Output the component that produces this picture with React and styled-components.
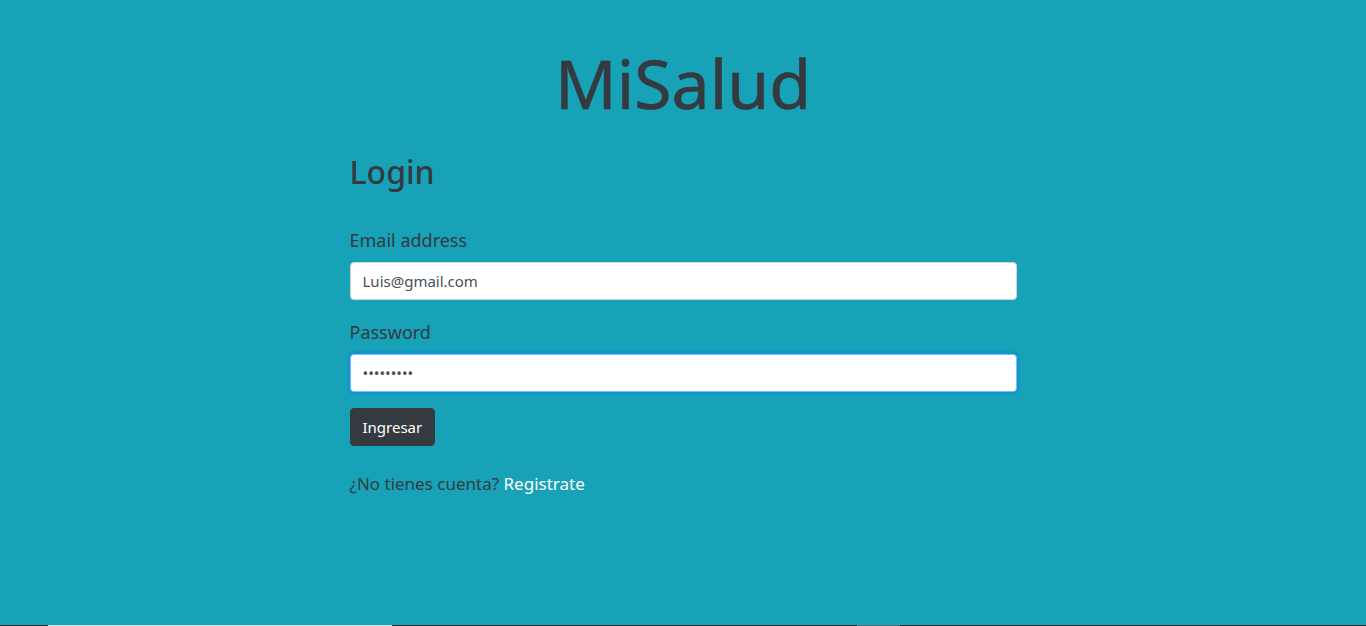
import React from 'react';
import styled, { createGlobalStyle } from 'styled-components';

const GlobalStyle = createGlobalStyle`
  * { box-sizing: border-box; }
  html, body { margin: 0; padding: 0; }
  body {
    font-family: "Noto Sans", "Open Sans", "Liberation Sans", sans-serif;
    color: #343a40;
    background: #17a2b8;
  }
`;

const Page = styled.div`
  min-height: 100vh;
  display: flex;
  flex-direction: column;
  background: #17a2b8;
`;

const Main = styled.main`
  flex: 1;
  padding-top: 42px;
`;

const Title = styled.h1`
  margin: 0;
  text-align: center;
  font-size: 68px;
  font-weight: 400;
  line-height: 1.2;
  color: #343a40;
  -webkit-text-stroke: 0.6px #343a40;
`;

const FormBox = styled.div`
  width: 667px;
  margin: 29px auto 0;
`;

const Heading = styled.h2`
  margin: 0 0 36px;
  font-size: 32px;
  font-weight: 500;
  line-height: 1.2;
`;

const Group = styled.div`
  margin-bottom: 16px;
  & + & {
    margin-top: 19px;
  }
`;

const Label = styled.label`
  display: block;
  margin-bottom: 8px;
  font-size: 18px;
  line-height: 1.5;
  color: #343a40;
`;

const Input = styled.input`
  display: block;
  width: 100%;
  height: 38px;
  padding: 6px 12px;
  font-family: inherit;
  font-size: 15px;
  color: #495057;
  background: #fff;
  border: 1px solid #ced4da;
  border-radius: 4px;
  outline: none;
  ${p => p.$focused && `
    border-color: #80bdff;
    box-shadow: 0 0 0 3px rgba(0, 123, 255, 0.25);
  `}
`;

const Button = styled.button`
  display: inline-block;
  height: 38px;
  padding: 0 12px;
  font-family: inherit;
  font-size: 15px;
  color: #fff;
  background: #343a40;
  border: 1px solid #343a40;
  border-radius: 4px;
  cursor: pointer;
`;

const Footer = styled.p`
  margin: 25px 0 0;
  font-size: 17px;
  line-height: 1.5;
`;

const Link = styled.a`
  color: #fff;
  text-decoration: none;
`;

const Strip = styled.div`
  display: flex;
  height: 1px;
`;

const Seg = styled.div`
  width: ${p => p.$w}px;
  flex: ${p => (p.$grow ? 1 : 'none')};
  background: ${p => p.$c};
`;

export default function App() {
  return (
    <Page>
      <GlobalStyle />
      <Main>
        <Title>MiSalud</Title>
        <FormBox>
          <Heading>Login</Heading>
          <Group>
            <Label htmlFor="email">Email address</Label>
            <Input id="email" type="email" defaultValue="Luis@gmail.com" />
          </Group>
          <Group>
            <Label htmlFor="password">Password</Label>
            <Input id="password" type="password" defaultValue="secret123" $focused autoFocus />
          </Group>
          <Button type="button">Ingresar</Button>
          <Footer>
            ¿No tienes cuenta? <Link href="#">Registrate</Link>
          </Footer>
        </FormBox>
      </Main>
      <Strip>
        <Seg $w={48} $c="#1f2a30" />
        <Seg $w={344} $c="#cfe8ec" />
        <Seg $w={465} $c="#1f2a30" />
        <Seg $w={43} $c="#5a6a70" />
        <Seg $grow $c="#1f2a30" />
      </Strip>
    </Page>
  );
}
